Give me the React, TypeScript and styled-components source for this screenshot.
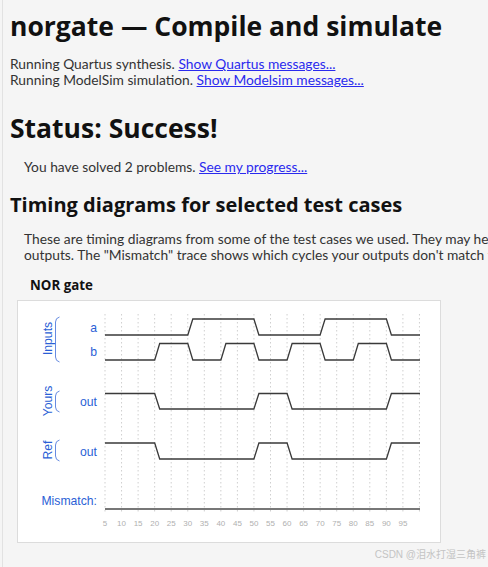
import React from "react";
import styled, { createGlobalStyle } from "styled-components";

const GlobalStyle = createGlobalStyle`
  html, body { margin: 0; padding: 0; }
  body {
    background: #f5f5f5;
    overflow: hidden;
    width: 488px;
    height: 567px;
  }
`;

const Page = styled.div`
  position: relative;
  margin-left: 2px;
  border-left: 1px solid #e2e2e2;
  padding-left: 7px;
  height: 567px;
  box-sizing: border-box;
  overflow: hidden;
  color: #222;
  font-family: Lato, "Noto Sans", sans-serif;
`;

const Title = styled.h1`
  margin: 0;
  padding-top: 8px;
  font-family: "Open Sans", "Noto Sans", sans-serif;
  font-weight: 700;
  font-size: 26.5px;
  line-height: 36px;
  color: #111;
  white-space: nowrap;
`;

const Text = styled.p<{ $top: number; $indent?: number }>`
  margin: ${(p) => p.$top}px 0 0 ${(p) => p.$indent ?? 0}px;
  font-size: 13.8px;
  line-height: 16px;
  color: #333;
  white-space: nowrap;
`;

const Link = styled.a`
  color: #2a2aee;
  text-decoration: underline;
`;

const StatusTitle = styled(Title)<{ $top: number }>`
  padding-top: 0;
  margin-top: ${(p) => p.$top}px;
`;

const SubTitle = styled.h2`
  margin: 16px 0 0;
  font-family: "Open Sans", "Noto Sans", sans-serif;
  font-weight: 700;
  font-size: 20px;
  line-height: 28px;
  color: #111;
  white-space: nowrap;
`;

const GateTitle = styled.h3`
  margin: 12px 0 0 20px;
  font-family: "Open Sans", "Noto Sans", sans-serif;
  font-weight: 700;
  font-size: 13.3px;
  line-height: 20px;
  color: #111;
`;

const DiagramBox = styled.div`
  margin: 5px 0 0 7px;
  width: 424px;
  height: 243px;
  box-sizing: border-box;
  background: #fff;
  border: 1px solid #dcdcdc;
`;

const Watermark = styled.div`
  position: absolute;
  right: 2px;
  bottom: 6px;
  font-family: "Liberation Sans", "Noto Sans CJK SC", sans-serif;
  font-size: 10px;
  color: #c4c4c4;
  white-space: nowrap;
`;

const X0 = 105;
const PX = 3.31;
const X = (t: number) => X0 + (t - 5) * PX;
const XEND = 420;
const SLOPE = 5;

function wave(init: 0 | 1, times: number[], yHi: number, yLo: number) {
  let v = init;
  let y = v ? yHi : yLo;
  let d = `M ${X0} ${y}`;
  for (const t of times) {
    const x0 = X(t);
    d += ` L ${x0.toFixed(1)} ${y}`;
    v = v ? 0 : 1;
    y = v ? yHi : yLo;
    d += ` L ${(x0 + SLOPE).toFixed(1)} ${y}`;
  }
  d += ` L ${XEND} ${y}`;
  return d;
}

function brace(x: number, y1: number, y2: number) {
  return `M ${x + 4} ${y1} Q ${x} ${y1 + 1} ${x} ${y1 + 5} L ${x} ${y2 - 5} Q ${x} ${y2 - 1} ${x + 4} ${y2}`;
}

const BLUE = "#2b5fd6";
const grid = Array.from({ length: 20 }, (_, i) => 5 + i * 5);
const ticks = Array.from({ length: 19 }, (_, i) => 5 + i * 5);

const Diagram = () => (
  <svg width="422" height="241" viewBox="18 301 422 241">
    {grid.map((t) => (
      <line
        key={t}
        x1={X(t)}
        x2={X(t)}
        y1={314}
        y2={512}
        stroke="#cfcfcf"
        strokeWidth={1}
        strokeDasharray="1.5 2.5"
      />
    ))}
    <g fill="none" stroke="#3a3a3a" strokeWidth={1.3}>
      <path d={wave(0, [30, 50, 70, 90], 319, 335)} />
      <path d={wave(0, [20, 30, 40, 50, 60, 70, 80, 90], 343.5, 360)} />
      <path d={wave(1, [20, 50, 60, 90], 393.5, 409)} />
      <path d={wave(1, [20, 50, 60, 90], 443, 459)} />
    </g>
    <line x1={X0} x2={XEND} y1={509} y2={509} stroke="#777" strokeWidth={2} />
    <g fill={BLUE} fontFamily="'Liberation Sans', Arial, sans-serif" fontSize={12.2}>
      <text x={97} y={332} textAnchor="end">a</text>
      <text x={97} y={356} textAnchor="end">b</text>
      <text x={97} y={405.5} textAnchor="end">out</text>
      <text x={97} y={455.5} textAnchor="end">out</text>
      <text x={97} y={504.5} textAnchor="end">Mismatch:</text>
      <text transform="translate(51.5 338.5) rotate(-90)" textAnchor="middle">Inputs</text>
      <text transform="translate(51.5 401) rotate(-90)" textAnchor="middle">Yours</text>
      <text transform="translate(51.5 450) rotate(-90)" textAnchor="middle">Ref</text>
    </g>
    <g fill="none" stroke={BLUE} strokeWidth={0.9} opacity={0.8}>
      <path d={brace(55.5, 317, 362)} />
      <path d={brace(55.5, 391, 412)} />
      <path d={brace(55.5, 440, 461)} />
    </g>
    <g fill="#b0b0b0" fontFamily="'Liberation Sans', Arial, sans-serif" fontSize={8}>
      {ticks.map((t) => (
        <text key={t} x={X(t)} y={525.5} textAnchor="middle">
          {t}
        </text>
      ))}
    </g>
  </svg>
);

export default function App() {
  return (
    <>
      <GlobalStyle />
      <Page>
        <Title>norgate — Compile and simulate</Title>
        <Text $top={12}>
          Running Quartus synthesis. <Link href="#">Show Quartus messages...</Link>
          <br />
          Running ModelSim simulation. <Link href="#">Show Modelsim messages...</Link>
        </Text>
        <StatusTitle $top={22}>Status: Success!</StatusTitle>
        <Text $top={13} $indent={14}>
          You have solved 2 problems. <Link href="#">See my progress...</Link>
        </Text>
        <SubTitle>Timing diagrams for selected test cases</SubTitle>
        <Text $top={12} $indent={14}>
          These are timing diagrams from some of the test cases we used. They may help you debug your circuit by comparing with the reference
          <br />
          outputs. The "Mismatch" trace shows which cycles your outputs don't match the reference outputs.
        </Text>
        <GateTitle>NOR gate</GateTitle>
        <DiagramBox>
          <Diagram />
        </DiagramBox>
        <Watermark>CSDN @泪水打湿三角裤</Watermark>
      </Page>
    </>
  );
}
